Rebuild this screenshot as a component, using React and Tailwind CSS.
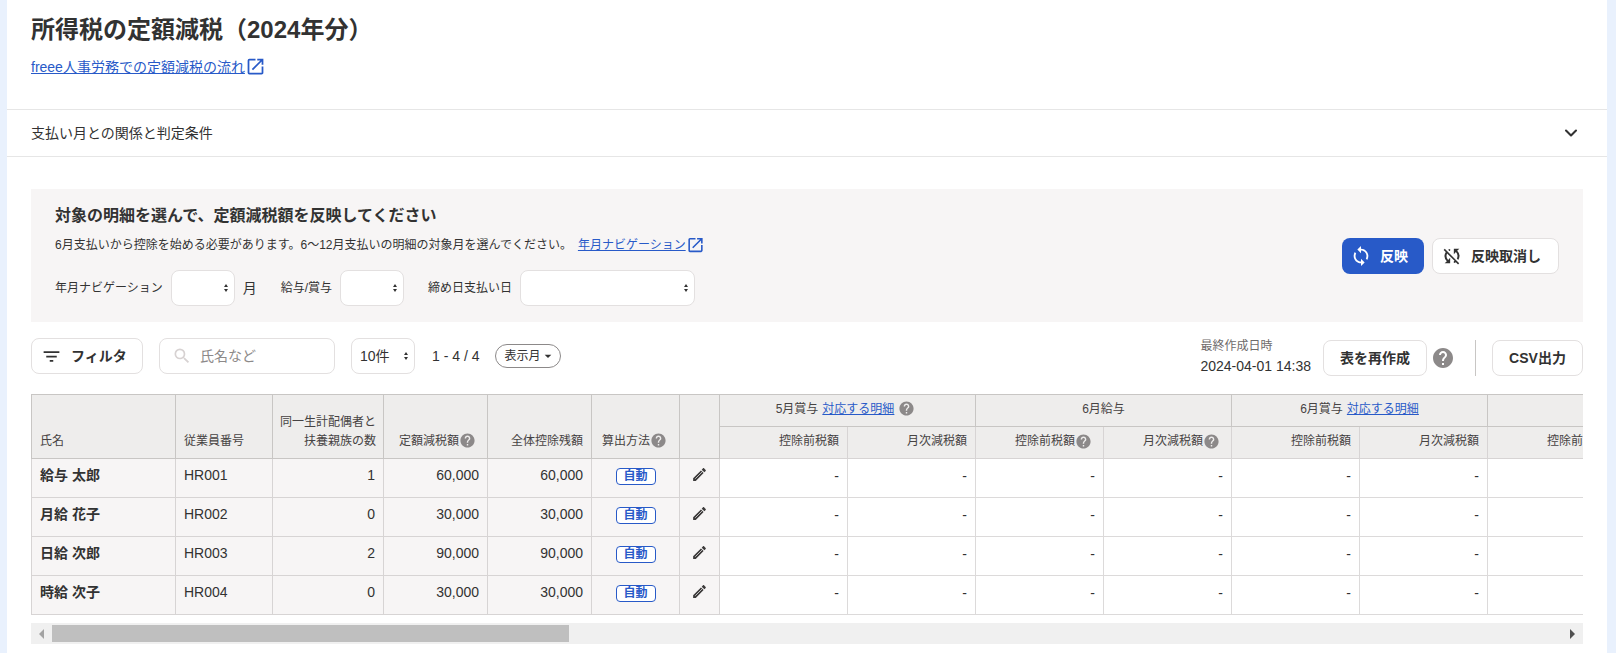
import React from "react";
import { ChevronDown } from "lucide-react";
import { MdSync, MdSyncDisabled, MdOpenInNew, MdFilterList, MdHelp, MdSearch, MdArrowDropDown } from "react-icons/md";

const employees = [
  { name: "給与 太郎", code: "HR001", dependents: 1, amount: "60,000", balance: "60,000" },
  { name: "月給 花子", code: "HR002", dependents: 0, amount: "30,000", balance: "30,000" },
  { name: "日給 次郎", code: "HR003", dependents: 2, amount: "90,000", balance: "90,000" },
  { name: "時給 次子", code: "HR004", dependents: 0, amount: "30,000", balance: "30,000" },
];

function Help({ className = "w-[17px] h-[17px]" }) {
  return <MdHelp className={`inline-block shrink-0 text-[#8c8989] ${className}`} />;
}

function Pencil() {
  return (
    <svg viewBox="0 0 24 24" className="inline-block w-[17px] h-[17px] mb-0.5">
      <path fill="#3c3a3a" d="M3 17.25V21h3.75L17.81 9.94l-3.75-3.75L3 17.25zM20.71 7.04c.39-.39.39-1.02 0-1.41l-2.34-2.34c-.39-.39-1.02-.39-1.41 0l-1.83 1.83 3.75 3.75 1.83-1.83z" />
      <path stroke="#f7f5f5" strokeWidth="1" d="M6 18l9.5-9.5" />
    </svg>
  );
}

function Select({ className = "", children }) {
  return (
    <div className={`h-9 flex items-center justify-between bg-white border border-[#e3e0e0] rounded-lg pl-3 pr-1.5 text-sm ${className}`}>
      <span>{children}</span>
      <span className="flex flex-col items-center gap-[2px]">
        <span className="w-0 h-0 border-x-[2.5px] border-x-transparent border-b-[3px] border-b-[#323232]" />
        <span className="w-0 h-0 border-x-[2.5px] border-x-transparent border-t-[3px] border-t-[#323232]" />
      </span>
    </div>
  );
}

function Button({ children, className = "" }) {
  return (
    <button className={`h-9 flex items-center justify-center bg-white border border-[#e3e0e0] rounded-lg text-sm font-bold text-[#323232] ${className}`}>
      {children}
    </button>
  );
}

const headCell = "bg-[#eeedec] border border-[#c8c6c4] px-2 text-xs font-normal text-[#464343] align-bottom pb-[9px]";
const groupCell = "bg-[#eeedec] border border-[#c8c6c4] px-2 text-xs font-normal text-[#464343] align-middle pb-1 text-center";
const subCell = "bg-[#eeedec] border border-[#d7d4d4] px-2 text-xs font-normal text-[#464343] align-middle pb-[3px] text-right";
const bodyCell = "bg-[#f7f5f5] border border-[#d7d4d4] px-2 pb-1.5 text-sm";
const moneyCell = "bg-white border border-[#dcdada] px-2 pb-1 text-sm text-right";

const subLabels = ["控除前税額", "月次減税額", "控除前税額", "月次減税額", "控除前税額", "月次減税額", "控除前税額"];

export default function App() {
  return (
    <div className="h-[653px] bg-[#e9f1fd] pl-[7px] pr-[9px] overflow-hidden font-['Liberation_Sans','Noto_Sans_CJK_JP',sans-serif] text-[#323232]">
      <div className="h-full bg-white">
        <div className="h-[110px] border-b border-[#e6e6e6] px-6 pt-3">
          <h1 className="text-2xl leading-9 font-bold">所得税の定額減税（2024年分）</h1>
          <a href="#" className="mt-2 flex items-center text-sm leading-5 text-[#285ac8]">
            <span className="underline">freee人事労務での定額減税の流れ</span>
            <MdOpenInNew className="w-[21px] h-[21px]" />
          </a>
        </div>
        <div className="h-[47px] border-b border-[#e6e6e6] pl-6 pr-[26px] flex items-center justify-between text-sm">
          <span>支払い月との関係と判定条件</span>
          <ChevronDown className="w-5 h-5" strokeWidth={2.5} />
        </div>

        <div className="mx-6 mt-8 h-[133px] bg-[#f7f5f5] px-6 flex items-start justify-between">
          <div>
            <h2 className="mt-[17px] text-base leading-5 font-bold">対象の明細を選んで、定額減税額を反映してください</h2>
            <p className="mt-[9px] flex items-center text-xs leading-5">
              <span>6月支払いから控除を始める必要があります。6〜12月支払いの明細の対象月を選んでください。</span>
              <a href="#" className="ml-1.5 flex items-center text-[#285ac8]">
                <span className="underline">年月ナビゲーション</span>
                <MdOpenInNew className="w-[19px] h-5" />
              </a>
            </p>
            <div className="mt-[15px] flex items-center text-xs">
              <span className="mr-2">年月ナビゲーション</span>
              <Select className="w-16" />
              <span className="ml-2 text-sm">月</span>
              <span className="ml-6 mr-2">給与/賞与</span>
              <Select className="w-16" />
              <span className="ml-6 mr-2">締め日支払い日</span>
              <Select className="w-[175px]" />
            </div>
          </div>
          <div className="mt-[49px] flex gap-2">
            <button className="w-[82px] h-9 flex items-center gap-2 pl-2 bg-[#285ac8] rounded-lg text-white text-sm font-bold">
              <MdSync className="w-[22px] h-[22px]" />
              反映
            </button>
            <Button className="w-[127px] !justify-start gap-2 pl-2">
              <MdSyncDisabled className="w-[22px] h-[22px]" />
              反映取消し
            </Button>
          </div>
        </div>

        <div className="mx-6 mt-4 h-[38px] flex items-start">
          <Button className="w-[112px] !justify-start gap-[9px] pl-[9px]">
            <MdFilterList className="w-[21px] h-[21px]" />
            フィルタ
          </Button>
          <div className="ml-4 w-[176px] h-9 flex items-center gap-2 bg-white border border-[#e3e0e0] rounded-lg px-3 text-sm text-[#8c8989]">
            <MdSearch className="w-5 h-5 text-[#d7d2d2]" />
            氏名など
          </div>
          <Select className="ml-4 w-16 !pl-2">10件</Select>
          <span className="ml-[17px] h-9 flex items-center text-sm">1 - 4 / 4</span>
          <span className="ml-4 mt-[6px] w-[66px] h-6 flex items-center justify-center border border-[#8c8989] rounded-full text-xs">
            表示月
            <MdArrowDropDown className="w-4 h-4 -mr-1" />
          </span>
          <div className="ml-auto mt-[2px] h-9 flex items-center">
            <div className="mr-3 mb-1 text-xs leading-[19px]">
              <div className="text-[#6e6b6b]">最終作成日時</div>
              <div className="text-sm">2024-04-01 14:38</div>
            </div>
            <Button className="w-[104px]">表を再作成</Button>
            <Help className="w-6 h-6 ml-1" />
            <div className="ml-5 mr-4 w-px h-9 bg-[#c8c6c4]" />
            <Button className="w-[91px]">CSV出力</Button>
          </div>
        </div>

        <div className="mx-6 mt-[18px] overflow-hidden">
          <table className="table-fixed border-collapse w-[1584px]">
            <colgroup>
              <col className="w-[144px]" />
              <col className="w-[97px]" />
              <col className="w-[111px]" />
              <col className="w-[104px]" />
              <col className="w-[104px]" />
              <col className="w-[88px]" />
              <col className="w-[40px]" />
              {subLabels.map((_, i) => (
                <col key={i} className="w-[128px]" />
              ))}
            </colgroup>
            <thead>
              <tr className="h-8">
                <th rowSpan={2} className={`${headCell} text-left`}>氏名</th>
                <th rowSpan={2} className={`${headCell} text-left`}>従業員番号</th>
                <th rowSpan={2} className={`${headCell} text-right leading-[19px] whitespace-nowrap !px-[7px] !pb-[7px]`}>同一生計配偶者と<br />扶養親族の数</th>
                <th rowSpan={2} className={`${headCell} text-right`}>
                  <span className="inline-flex items-center justify-end mr-[3px]">定額減税額<Help /></span>
                </th>
                <th rowSpan={2} className={`${headCell} text-right`}>全体控除残額</th>
                <th rowSpan={2} className={`${headCell} text-left !pl-[10px]`}>
                  <span className="inline-flex items-center">算出方法<Help /></span>
                </th>
                <th rowSpan={2} className={headCell} />
                <th colSpan={2} className={groupCell}>
                  <span className="inline-flex items-center gap-1 mr-1">5月賞与<a href="#" className="underline text-[#285ac8]">対応する明細</a><Help /></span>
                </th>
                <th colSpan={2} className={groupCell}>6月給与</th>
                <th colSpan={2} className={groupCell}>
                  <span className="inline-flex items-center gap-1">6月賞与<a href="#" className="underline text-[#285ac8]">対応する明細</a></span>
                </th>
                <th className={groupCell} />
              </tr>
              <tr className="h-8">
                {subLabels.map((label, i) => (
                  <th key={i} className={subCell}>
                    <span className={`inline-flex items-center whitespace-nowrap ${i === 2 || i === 3 ? "mr-[3px]" : ""}`}>
                      {label}
                      {(i === 2 || i === 3) && <Help />}
                    </span>
                  </th>
                ))}
              </tr>
            </thead>
            <tbody>
              {employees.map((e) => (
                <tr key={e.code} className="h-[39px]">
                  <td className={`${bodyCell} font-bold`}>{e.name}</td>
                  <td className={bodyCell}>{e.code}</td>
                  <td className={`${bodyCell} text-right`}>{e.dependents}</td>
                  <td className={`${bodyCell} text-right`}>{e.amount}</td>
                  <td className={`${bodyCell} text-right`}>{e.balance}</td>
                  <td className={`${bodyCell} text-center`}>
                    <span className="inline-block align-middle w-10 h-[17px] leading-[15px] border border-[#285ac8] rounded-[4px] bg-white text-xs font-bold text-[#285ac8]">自動</span>
                  </td>
                  <td className={`${bodyCell} text-center`}>
                    <Pencil />
                  </td>
                  {subLabels.map((_, i) => (
                    <td key={i} className={moneyCell}>{i < 6 ? "-" : ""}</td>
                  ))}
                </tr>
              ))}
            </tbody>
          </table>
        </div>

        <div className="mx-6 mt-2 h-[21px] bg-[#f0f0f0] flex items-center">
          <span className="w-[21px] flex justify-center">
            <span className="w-0 h-0 border-y-[5px] border-y-transparent border-r-[5px] border-r-[#a3a3a3]" />
          </span>
          <span className="w-[517px] h-[17px] bg-[#bfbfbf]" />
          <span className="ml-auto w-[21px] flex justify-center">
            <span className="w-0 h-0 border-y-[5px] border-y-transparent border-l-[5px] border-l-[#505050]" />
          </span>
        </div>
      </div>
    </div>
  );
}
